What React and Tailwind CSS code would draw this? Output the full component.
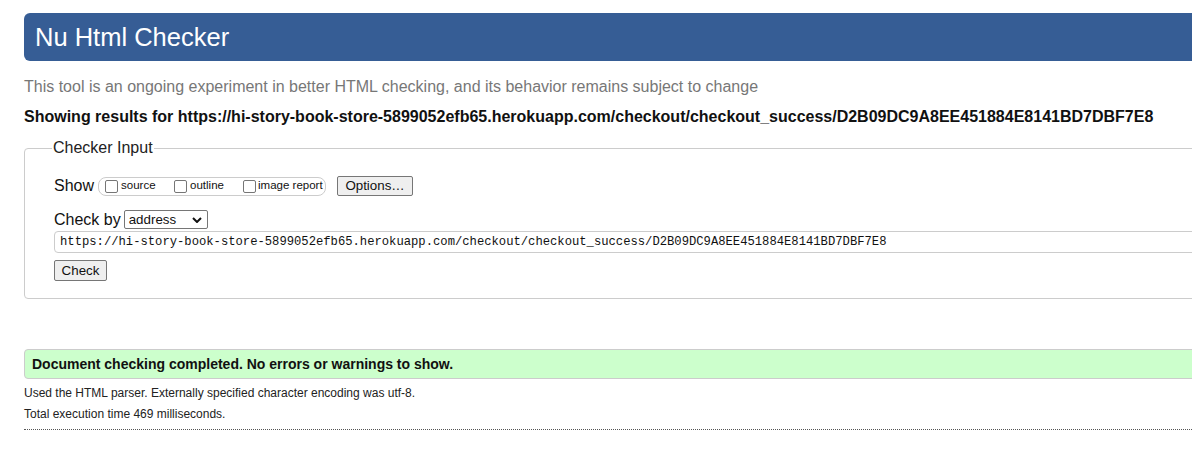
export default function App() {
  const url =
    'https://hi-story-book-store-5899052efb65.herokuapp.com/checkout/checkout_success/D2B09DC9A8EE451884E8141BD7DBF7E8';

  return (
    <div className="w-[1192px] h-[468px] overflow-hidden bg-white font-['Liberation_Sans',Arial,sans-serif] text-[#111]">
      <div className="w-[1260px] pl-[24px] pt-[13px]">
        <h1 className="h-[48px] bg-[#365d95] rounded-l-[6px] pl-[11px] text-white text-[25.5px] leading-[48px] font-normal">
          Nu Html Checker
        </h1>

        <p className="mt-[16px] text-[16px] leading-[20px] text-[#777]">
          This tool is an ongoing experiment in better HTML checking, and its behavior remains subject to change
        </p>
        <p className="mt-[10px] text-[16px] leading-[20px] font-bold">
          Showing results for {url}
        </p>

        <fieldset className="mt-[11px] h-[161px] border border-[#ccc] rounded-[4px] pl-[29px] pt-0">
          <legend className="ml-[-2px] px-[1px] text-[16px] leading-[20px] text-[#222]">Checker Input</legend>

          <div className="mt-[18px] flex items-center h-[20px]">
            <span className="text-[16px] mr-[4px]">Show</span>
            <div className="flex items-center h-[19px] w-[228px] border border-[#ccc] rounded-[8px] pl-[6px] text-[11.5px]">
              <Box />
              <span className="ml-[3px] w-[53px]">source</span>
              <Box />
              <span className="ml-[3px] w-[53px]">outline</span>
              <Box />
              <span className="ml-[2px]">image report</span>
            </div>
            <button className="ml-[11px] h-[20px] w-[76px] border border-[#767676] rounded-[2px] bg-[#efefef] text-[13.33px] leading-[18px]">
              Options…
            </button>
          </div>

          <div className="mt-[14px] flex items-center h-[19px]">
            <span className="text-[16px] mr-[3px]">Check by</span>
            <div className="flex items-center justify-between h-[19px] w-[84px] border border-[#767676] rounded-[2px] pl-[4px] pr-[4px] text-[13.33px]">
              <span>address</span>
              <svg width="10" height="6" viewBox="0 0 10 6" className="mr-[1px]">
                <path d="M1 1l4 4 4-4" fill="none" stroke="#111" strokeWidth="2" />
              </svg>
            </div>
          </div>

          <div className="mt-[2px] h-[22px] border border-[#ccc] rounded-[4px] pl-[5px] flex items-center font-['Liberation_Mono',monospace] text-[12.2px] text-[#111]">
            {url}
          </div>

          <button className="mt-[7px] h-[21px] w-[53px] border border-[#767676] rounded-[2px] bg-[#efefef] text-[13.33px] leading-[19px]">
            Check
          </button>
        </fieldset>

        <div className="mt-[50px] h-[30px] border border-[#ccc] rounded-l-[4px] bg-[#ccffcc] pl-[7px] flex items-center text-[14px] font-bold">
          Document checking completed. No errors or warnings to show.
        </div>
        <p className="mt-[7px] text-[12px] leading-[14px] text-[#222]">
          Used the HTML parser. Externally specified character encoding was utf-8.
        </p>
        <p className="mt-[7px] text-[12px] leading-[14px] text-[#222]">Total execution time 469 milliseconds.</p>
        <div className="mt-[8px] border-t border-dotted border-[#555]" />
      </div>
    </div>
  );
}

function Box() {
  return <span className="inline-block w-[13px] h-[13px] border border-[#767676] rounded-[2px] bg-white" />;
}
